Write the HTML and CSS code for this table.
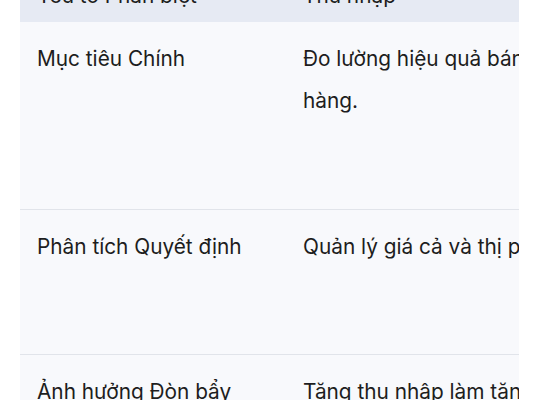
FILE: index.html
```html
<!DOCTYPE html>
<html lang="vi">
<head>
    <meta charset="UTF-8">
    <meta name="viewport" content="width=device-width, initial-scale=1.0">
    <link rel="stylesheet" href="styles.css">
    <title>So sánh</title>
</head>
<body class="main">

<div class="table-wrap">
    <table class="compare">
        <thead>
            <tr>
                <th class="col-key">Yếu tố Phân biệt</th>
                <th class="col-a">Thu nhập</th>
                <th class="col-b">Chi phí</th>
            </tr>
        </thead>
        <tbody>
            <tr class="row-1">
                <td>Mục tiêu Chính</td>
                <td>Đo lường hiệu quả bán hàng.</td>
                <td>Kiểm soát chi phí vận hành.</td>
            </tr>
            <tr class="row-2">
                <td>Phân tích Quyết định</td>
                <td>Quản lý giá cả và thị phần.</td>
                <td>Tối ưu hóa nguồn lực.</td>
            </tr>
            <tr class="row-3">
                <td>Ảnh hưởng Đòn bẩy</td>
                <td>Tăng thu nhập làm tăng lợi nhuận.</td>
                <td>Giảm chi phí làm tăng lợi nhuận.</td>
            </tr>
        </tbody>
    </table>
</div>

</body>
</html>
```

FILE: styles.css
```css
.main {
    margin: 0;
    background-color: #ffffff;
    font-family: Inter, "Noto Sans", sans-serif;
    color: #1d1d20;
}

.table-wrap {
    width: 499px;
    margin-left: 20px;
    margin-top: -41px;
    overflow: hidden;
}

.compare {
    table-layout: fixed;
    width: 878px;
    border-collapse: collapse;
    font-size: 20.8px;
    line-height: 42px;
    background-color: #f8f9fc;
}

.compare th,
.compare td {
    box-sizing: border-box;
    text-align: left;
    vertical-align: top;
    padding: 16px 16px 0 17px;
}

.compare th {
    font-weight: 400;
    background-color: #e6eaf3;
    padding-bottom: 5px;
}

.compare tbody tr {
    border-bottom: 1px solid #e1e4ea;
}

.col-key {
    width: 266px;
}

.col-a {
    width: 305px;
}

.col-b {
    width: 307px;
}

.row-1 {
    height: 187px;
}

.row-2 {
    height: 145px;
}

.row-3 {
    height: 145px;
}
```
